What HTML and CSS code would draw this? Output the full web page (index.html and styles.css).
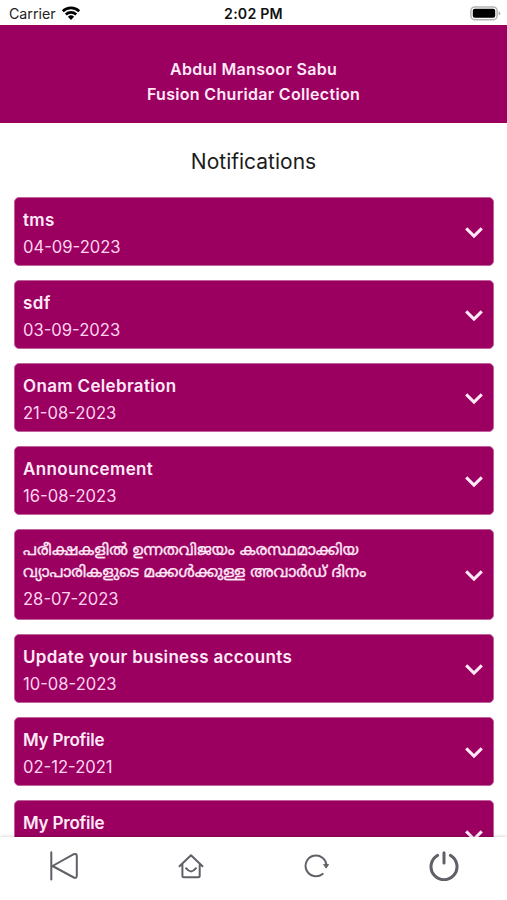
FILE: index.html
```html
<!DOCTYPE html>
<html lang="en">
<head>
<meta charset="utf-8">
<title>Notifications</title>
<link rel="stylesheet" href="styles.css">
</head>
<body>
<svg class="defs" width="0" height="0" aria-hidden="true">
  <symbol id="chevron" viewBox="0 0 20 14"><path d="M2.2 3.4 L10 11.1 L17.8 3.4"/></symbol>
</svg>
<div class="status">
  <div class="carrier"><span>Carrier</span>
    <svg width="20" height="15" viewBox="0 0 20 15"><g fill="none" stroke="#000" stroke-width="2.6"><path d="M1.8 5.2 A11.8 11.8 0 0 1 18.2 5.2"/><path d="M4.8 8.5 A7.5 7.5 0 0 1 15.2 8.5"/></g><path d="M10 14 L6.9 10.8 A4.5 4.5 0 0 1 13.1 10.8 Z"/></svg>
  </div>
  <div class="time">2:02 PM</div>
  <div class="battery"><svg width="31" height="15" viewBox="0 0 31 15"><rect x=".9" y=".9" width="26.2" height="12.8" rx="3.8" fill="#fff" stroke="#b5b5b5" stroke-width="1.5"/><rect x="2.8" y="2.8" width="22.4" height="9" rx="2"/><path d="M28.6 5 Q32 7.3 28.6 9.6Z" fill="#aaa"/></svg></div>
</div>
<header class="header">
  <div class="owner">Abdul Mansoor Sabu</div>
  <div class="shop">Fusion Churidar Collection</div>
</header>
<main class="content">
  <h1>Notifications</h1>
  <div class="list">
    <article class="card"><div><h2>tms</h2><p>04-09-2023</p></div><svg class="chev"><use href="#chevron"/></svg></article>
    <article class="card"><div><h2>sdf</h2><p>03-09-2023</p></div><svg class="chev"><use href="#chevron"/></svg></article>
    <article class="card"><div><h2>Onam Celebration</h2><p>21-08-2023</p></div><svg class="chev"><use href="#chevron"/></svg></article>
    <article class="card"><div><h2>Announcement</h2><p>16-08-2023</p></div><svg class="chev"><use href="#chevron"/></svg></article>
    <article class="card tall"><div><h2 class="ml" lang="ml">പരീക്ഷകളിൽ ഉന്നതവിജയം കരസ്ഥമാക്കിയ<br>വ്യാപാരികളുടെ മക്കൾക്കുള്ള അവാർഡ് ദിനം</h2><p>28-07-2023</p></div><svg class="chev"><use href="#chevron"/></svg></article>
    <article class="card"><div><h2>Update your business accounts</h2><p>10-08-2023</p></div><svg class="chev"><use href="#chevron"/></svg></article>
    <article class="card"><div><h2 class="snug">My Profile</h2><p>02-12-2021</p></div><svg class="chev"><use href="#chevron"/></svg></article>
    <article class="card"><div><h2 class="snug">My Profile</h2></div><svg class="chev"><use href="#chevron"/></svg></article>
  </div>
</main>
<nav class="tabs">
  <a><svg width="30" height="30" viewBox="0 0 30 30"><path d="M2.3 1.2V28.6M3.5 15 L24.8 3.2 Q27.8 2.2 27.8 5.2V24.6Q27.8 27.8 24.8 26.5Z"/></svg></a>
  <a><svg width="26" height="26" viewBox="0 0 26 26"><path d="M1.5 13.2 L13 2.2 L24.5 13.2M4.4 11V22.7Q4.4 24.2 6 24.2H20.2Q21.7 24.2 21.7 22.7V11M8 15.2Q13 21.6 18 15.2"/></svg></a>
  <a><svg width="26" height="26" viewBox="0 0 26 26"><path d="M18.6 20.9A10.4 10.4 0 1 1 22.4 12.8"/><path class="solid" d="M20 11.4H24.5L22.3 14.8Z"/></svg></a>
  <a><svg class="power" width="30" height="30" viewBox="0 0 30 30"><path d="M15 1.8V12M8.6 4.4A13 13 0 1 0 21.4 4.4"/></svg></a>
</nav>
</body>
</html>
```
FILE: styles.css
```css
* { box-sizing: border-box; }
body {
  margin: 0;
  height: 900px;
  overflow: hidden;
  display: flex;
  flex-direction: column;
  background: #fff;
  font-family: Inter, "Noto Sans", sans-serif;
}
h1, h2, p { margin: 0; }
.defs { position: absolute; }
.status {
  height: 25px;
  flex: none;
  display: grid;
  grid-template-columns: 1fr auto 1fr;
  align-items: center;
  padding: 3px 6px 0 9px;
  font: 14.2px/20px Inter, sans-serif;
  color: #222;
}
.carrier { display: flex; align-items: center; gap: 5px; }
.carrier svg { margin-top: -2px; }
.time { font-weight: 600; color: #111; margin-left: -3px; letter-spacing: .2px; }
.battery { display: flex; justify-content: flex-end; margin-top: -2px; }
.header {
  height: 98px;
  flex: none;
  padding-top: 32px;
  background: #9b0061;
  color: #ffe9f7;
  text-align: center;
  font: 600 16px/25px Inter, sans-serif;
  letter-spacing: .32px;
}
.content { flex: 1; min-height: 0; overflow: hidden; }
h1 {
  padding-top: 23px;
  height: 74px;
  font-size: 21px;
  line-height: 31px;
  font-weight: 400;
  text-align: center;
  color: #1c1c1c;
}
.list { display: flex; flex-direction: column; gap: 14px; padding: 0 13px 0 14px; }
.card {
  flex: none;
  height: 69px;
  display: flex;
  align-items: flex-start;
  justify-content: space-between;
  padding: 9px 9px 0 8px;
  border: 1px solid #c0629b;
  border-radius: 5px;
  background: #9b0061;
  color: #ffe9f7;
}
.card.tall { height: 91px; }
h2 { font-size: 17px; line-height: 26px; font-weight: 600; letter-spacing: .34px; }
h2.snug { letter-spacing: -.2px; }
h2.ml { padding-top: 2px; font: 400 15.55px/22px "Noto Sans Malayalam", "Noto Sans", sans-serif; letter-spacing: 0; white-space: nowrap; -webkit-text-stroke: .35px #ffe9f7; }
.card p { font-size: 16.6px; line-height: 28px; color: #ffd3ee; }
.chev { width: 20px; height: 14px; margin-top: 18px; fill: none; stroke: #ffe9f7; stroke-width: 3; }
.tall .chev { margin-top: 29px; }
.tabs {
  position: relative;
  flex: none;
  height: 63px;
  display: grid;
  grid-template-columns: repeat(4, 1fr);
  background: #fff;
  box-shadow: 0 -1px 3px rgba(0, 0, 0, .14);
}
.tabs a { display: flex; justify-content: center; align-items: center; padding: 0 0 5px 1px; }
.tabs svg { fill: none; stroke: #606068; stroke-width: 2; stroke-linejoin: round; stroke-linecap: round; }
.tabs .power { stroke-width: 3; }
.tabs .solid { fill: #606068; stroke-width: 1; }
```
